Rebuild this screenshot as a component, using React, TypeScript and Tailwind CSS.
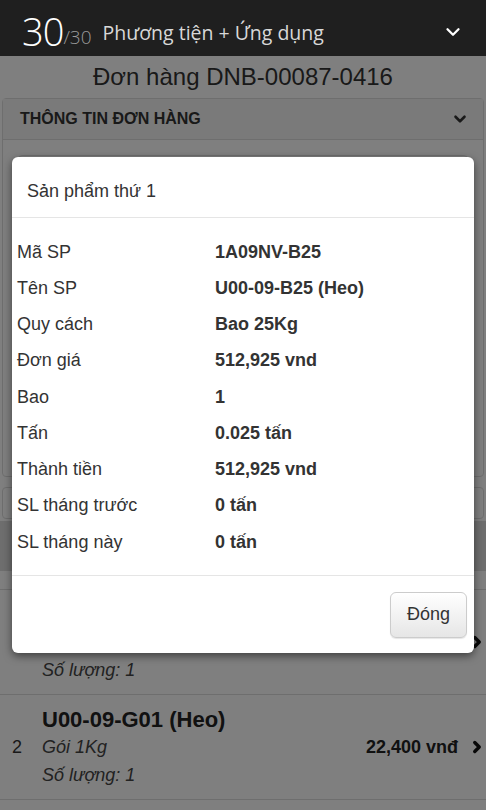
import { ChevronDown, ChevronRight } from 'lucide-react'

const rows: [string, string][] = [
  ['Mã SP', '1A09NV-B25'],
  ['Tên SP', 'U00-09-B25 (Heo)'],
  ['Quy cách', 'Bao 25Kg'],
  ['Đơn giá', '512,925 vnd'],
  ['Bao', '1'],
  ['Tấn', '0.025 tấn'],
  ['Thành tiền', '512,925 vnd'],
  ['SL tháng trước', '0 tấn'],
  ['SL tháng này', '0 tấn'],
]

const items = [
  { no: 1, name: 'U00-09-B25 (Heo)', pack: 'Bao 25Kg', qty: 1, price: '512,925 vnđ' },
  { no: 2, name: 'U00-09-G01 (Heo)', pack: 'Gói 1Kg', qty: 1, price: '22,400 vnđ' },
]

export default function App() {
  return (
    <div className="relative w-[486px] h-[810px] overflow-hidden bg-white font-['Liberation_Sans',Arial,sans-serif] text-[#333]">
      <header className="relative z-20 h-[56px] bg-[#1f1f1f] flex items-center pt-[6px] pl-[22px] pr-[22px] font-['Open_Sans','Noto_Sans',sans-serif]">
        <span className="text-white text-[38px] font-light leading-none tracking-[-1px]">30</span>
        <span className="text-[#9a9a9a] text-[19px] font-light leading-none mt-[12px]">/30</span>
        <span className="ml-[11px] text-[#d8d8d8] text-[19.5px] leading-none mt-[4px]">Phương tiện + Ứng dụng</span>
        <ChevronDown className="ml-auto mt-[2px] text-white" size={22} strokeWidth={2.5} />
      </header>

      <h1 className="h-[42px] flex items-center justify-center text-[24px] text-[#333]">Đơn hàng DNB-00087-0416</h1>

      <div className="mx-[2px] border border-[#ddd] rounded-[4px]">
        <div className="h-[41px] bg-[#f5f5f5] border-b border-[#ddd] flex items-center pl-[17px] pr-[14px]">
          <span className="text-[16px] font-bold">THÔNG TIN ĐƠN HÀNG</span>
          <ChevronDown className="ml-auto" size={18} strokeWidth={3.5} />
        </div>
        <div className="h-[336px] px-[15px] py-[15px]">
          <div className="h-full border border-[#ddd] rounded-[4px]" />
        </div>
      </div>

      <div className="mx-[2px] mt-[10px] h-[32px] border border-[#ddd] rounded-[4px]" />
      <div className="mt-[2px] h-[50px] bg-[#ddd]" />

      <ul className="mt-[18px] border-t border-[#ddd]">
        {items.map((it) => (
          <li key={it.no} className="h-[105px] border-b border-[#ddd] flex items-center pl-[12px] pr-0">
            <span className="w-[30px] text-[18px]">{it.no}</span>
            <div className="flex-1 flex flex-col pt-[2px]">
              <span className="text-[22px] font-bold leading-[26px] text-[#222]">{it.name}</span>
              <span className="text-[18px] italic text-[#444] leading-[29px]">{it.pack}</span>
              <span className="text-[18px] italic text-[#444] leading-[27px]">Số lượng: {it.qty}</span>
            </div>
            <span className="text-[18px] font-bold text-[#222]">{it.price}</span>
            <ChevronRight className="ml-[10px] text-[#111]" size={18} strokeWidth={4.5} />
          </li>
        ))}
      </ul>

      <div className="absolute left-0 right-0 top-[56px] bottom-0 z-10 bg-black/50" />

      <div className="absolute z-20 left-[12px] top-[157px] w-[462px] h-[496px] bg-white rounded-[6px] shadow-[0_3px_9px_rgba(0,0,0,0.5)] flex flex-col">
        <div className="h-[61px] border-b border-[#e5e5e5] flex items-center pt-[9px] px-[15px] text-[18px]">Sản phẩm thứ 1</div>
        <div className="flex-1 pt-[16px] pl-[5px]">
          {rows.map(([k, v]) => (
            <div key={k} className="h-[36.25px] flex items-center text-[18px]">
              <span className="w-[198px]">{k}</span>
              <span className="font-bold">{v}</span>
            </div>
          ))}
        </div>
        <div className="h-[78px] border-t border-[#e5e5e5] flex items-center justify-end pr-[7px]">
          <button type="button" className="w-[77px] h-[46px] rounded-[6px] border border-[#ccc] bg-gradient-to-b from-white to-[#e6e6e6] text-[18px] text-[#333] shadow-[0_1px_1px_rgba(0,0,0,0.1)]">
            Đóng
          </button>
        </div>
      </div>
    </div>
  )
}
